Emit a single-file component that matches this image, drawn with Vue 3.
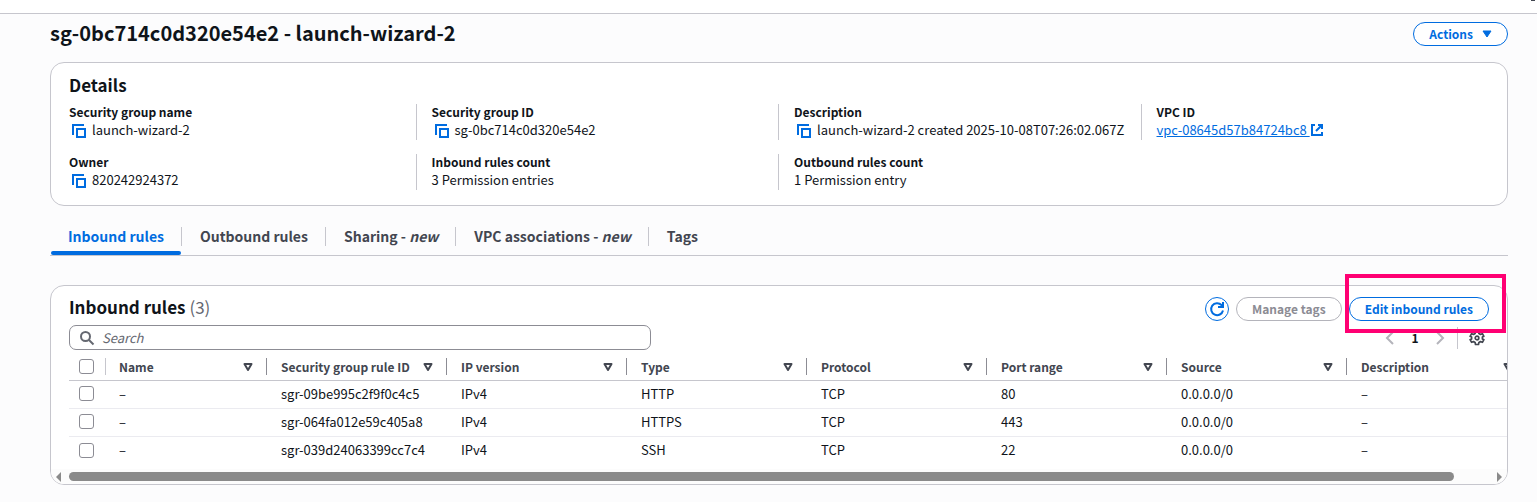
<script setup>
import { ref } from 'vue'

const details = [
  { label: 'Security group name', value: 'launch-wizard-2', copy: true },
  { label: 'Security group ID', value: 'sg-0bc714c0d320e54e2', copy: true },
  { label: 'Description', value: 'launch-wizard-2 created 2025-10-08T07:26:02.067Z', copy: true },
  { label: 'VPC ID', value: 'vpc-08645d57b84724bc8', link: true },
  { label: 'Owner', value: '820242924372', copy: true },
  { label: 'Inbound rules count', value: '3 Permission entries' },
  { label: 'Outbound rules count', value: '1 Permission entry' },
]

const tabs = [
  { label: 'Inbound rules' },
  { label: 'Outbound rules' },
  { label: 'Sharing', isNew: true },
  { label: 'VPC associations', isNew: true },
  { label: 'Tags' },
]
const activeTab = ref(0)
const query = ref('')

const columns = ['Name', 'Security group rule ID', 'IP version', 'Type', 'Protocol', 'Port range', 'Source', 'Description']
const rules = [
  ['–', 'sgr-09be995c2f9f0c4c5', 'IPv4', 'HTTP', 'TCP', '80', '0.0.0.0/0', '–'],
  ['–', 'sgr-064fa012e59c405a8', 'IPv4', 'HTTPS', 'TCP', '443', '0.0.0.0/0', '–'],
  ['–', 'sgr-039d24063399cc7c4', 'IPv4', 'SSH', 'TCP', '22', '0.0.0.0/0', '–'],
]
</script>

<template>
  <div class="page">
    <div class="topbar"><i class="handle"></i></div>
    <main class="content">
      <header class="title-row">
        <h1>sg-0bc714c0d320e54e2 - launch-wizard-2</h1>
        <button type="button" class="btn">
          Actions
          <svg class="caret" width="10" height="8" viewBox="0 0 10 8"><path d="M1 1h8L5 7z" fill="currentColor" stroke="currentColor" stroke-linejoin="round" /></svg>
        </button>
      </header>

      <section class="panel details">
        <h2>Details</h2>
        <dl class="grid">
          <div v-for="d in details" :key="d.label" class="item">
            <dt>{{ d.label }}</dt>
            <dd>
              <button v-if="d.copy" type="button" class="copy" :aria-label="'Copy ' + d.label">
                <svg width="16" height="16" viewBox="0 0 16 16" fill="none" stroke="currentColor" stroke-width="2"><path d="M2 12V2h11" /><path d="M6 6h8v8H6z" /></svg>
              </button>
              <a v-if="d.link" href="#">{{ d.value }}&nbsp;<svg width="14" height="14" viewBox="0 0 14 14" fill="none" stroke="currentColor" stroke-width="2"><path d="M5 2H2v10h10V9" /><path d="M8 2h4v4M12 2L6 8" /></svg></a>
              <span v-else>{{ d.value }}</span>
            </dd>
          </div>
        </dl>
      </section>

      <div class="tabs" role="tablist">
        <button
          v-for="(t, i) in tabs"
          :key="t.label"
          type="button"
          role="tab"
          class="tab"
          :class="{ active: i === activeTab }"
          :aria-selected="i === activeTab"
          @click="activeTab = i"
        ><span>{{ t.label }}<template v-if="t.isNew"> - <em>new</em></template></span></button>
      </div>

      <section class="panel rules">
        <div class="rules-head">
          <h2>Inbound rules <span class="count">(3)</span></h2>
          <div class="actions">
            <button type="button" class="btn round" aria-label="Refresh">
              <svg width="16" height="16" viewBox="0 0 16 16" fill="none" stroke="currentColor" stroke-width="2"><path d="M14 9.500A6 6 0 1 1 12.500 4L14 5.500" /><path d="M14 1v5H9" /></svg>
            </button>
            <button type="button" class="btn" disabled>Manage tags</button>
            <div class="marked">
              <button type="button" class="btn">Edit inbound rules</button>
            </div>
          </div>
        </div>
        <div class="tools">
          <label class="search">
            <svg width="16" height="16" viewBox="0 0 16 16" fill="none" stroke="currentColor" stroke-width="2"><circle cx="6.5" cy="6.5" r="4.5" /><path d="M10 10l4.500 4.500" /></svg>
            <input v-model="query" type="text" placeholder="Search" aria-label="Search" />
          </label>
          <div class="pager">
            <button type="button" class="icon" aria-label="Previous page">
              <svg width="16" height="16" viewBox="0 0 16 16" fill="none" stroke="currentColor" stroke-width="2"><path d="M11 2L5 8l6 6" /></svg>
            </button>
            <span class="num">1</span>
            <button type="button" class="icon" aria-label="Next page">
              <svg width="16" height="16" viewBox="0 0 16 16" fill="none" stroke="currentColor" stroke-width="2"><path d="M5 2l6 6-6 6" /></svg>
            </button>
            <button type="button" class="icon gear" aria-label="Preferences">
              <svg width="16" height="16" viewBox="0 0 16 16" fill="none" stroke="currentColor" stroke-width="1.700" stroke-linejoin="round"><path d="M6.500 1.500h3l.4 2 1.600.9 1.900-.7 1.500 2.600-1.500.8v1.800l1.500.8-1.500 2.600-1.900-.7-1.600.9-.4 2h-3l-.4-2-1.600-.9-1.900.7-1.500-2.600 1.500-.8V7.100l-1.500-.8 1.500-2.600 1.900.7 1.600-.9z" /><circle cx="8" cy="8" r="1.800" /></svg>
            </button>
          </div>
        </div>

        <div class="table-wrap">
          <table>
            <thead>
              <tr>
                <th class="check"><input type="checkbox" aria-label="Select all rules" /></th>
                <th v-for="(c, i) in columns" :key="c" :class="{ first: i === 0 }">
                  <div class="th">
                    <span>{{ c }}</span>
                    <svg width="10" height="8" viewBox="0 0 10 8" fill="none" stroke="currentColor" stroke-width="2" stroke-linejoin="round"><path d="M1.500 1h7L5 7z" /></svg>
                  </div>
                </th>
              </tr>
            </thead>
            <tbody>
              <tr v-for="r in rules" :key="r[1]">
                <td class="check"><input type="checkbox" :aria-label="'Select ' + r[1]" /></td>
                <td v-for="(v, i) in r" :key="i">{{ v }}</td>
              </tr>
            </tbody>
          </table>
        </div>
        <div class="scroll">
          <svg width="5" height="10" viewBox="0 0 5 10"><path d="M5 0v10L0 5z" fill="currentColor" /></svg>
          <div class="track"><div class="thumb"></div></div>
          <svg width="5" height="10" viewBox="0 0 5 10"><path d="M0 0v10l5-5z" fill="currentColor" /></svg>
        </div>
      </section>
    </main>
  </div>
</template>

<style>
body {
  margin: 0;
  background: #fcfcfd;
}
</style>

<style scoped>
.page {
  font-family: "Noto Sans CJK JP", "Noto Sans", sans-serif;
  font-size: 13px;
  line-height: 18px;
  color: #0f141a;
}
.page * { box-sizing: border-box; }
button, input { font: inherit; color: inherit; }
button { cursor: pointer; }
svg { display: block; flex: none; }
h1, h2, dl, dd { margin: 0; }
.topbar {
  display: flex;
  justify-content: flex-end;
  height: 14px;
  padding-right: 2px;
  background: #fff;
  border-bottom: 1px solid #c6c6cd;
}
.handle { width: 4px; height: 1px; background: #424650; }
.content { padding: 8px 29px 16px 50px; }
.title-row {
  display: flex;
  justify-content: space-between;
  align-items: flex-start;
  height: 24px;
  margin-bottom: 16px;
}
h1 { font-size: 20px; line-height: 22px; font-weight: 700; }
h2 { font-size: 17px; line-height: 20px; font-weight: 700; }
.btn {
  display: flex;
  align-items: center;
  gap: 9px;
  height: 24px;
  padding: 0 15px;
  border: 1px solid #006ce0;
  border-radius: 12px;
  background: #fff;
  color: #006ce0;
  font-size: 12px;
  font-weight: 700;
}
.btn:disabled { border-color: #b4b4bb; color: #8c8c94; }
.btn.round { width: 24px; padding: 0; justify-content: center; }
.panel {
  border: 1px solid #c6c6cd;
  border-radius: 14px;
  background: #fff;
}
.details { padding: 12px 18px 15px; }
.grid {
  display: grid;
  grid-template-columns: repeat(4, 1fr);
  gap: 14px 30px;
  margin-top: 9px;
}
.item { position: relative; }
.item:not(:nth-child(4n + 1))::before {
  content: "";
  position: absolute;
  left: -16px;
  top: 0;
  bottom: 0;
  border-left: 1px solid #c6c6cd;
}
dt { padding-bottom: 2px; font-size: 12px; line-height: 16px; font-weight: 700; }
dd { display: flex; align-items: flex-start; height: 18px; line-height: 16px; white-space: nowrap; }
.copy {
  padding: 0;
  margin: 1px 5px 0 2px;
  border: 0;
  background: none;
  color: #006ce0;
}
a { display: flex; align-items: center; color: #006ce0; text-decoration: underline; }
.tabs {
  display: flex;
  margin: 16px 0 29px;
  border-bottom: 1px solid #c6c6cd;
}
.tab {
  position: relative;
  height: 33px;
  padding: 0 0 4px;
  border: 0;
  background: none;
  color: #424650;
  font-size: 14px;
  line-height: 19px;
  font-weight: 700;
}
.tab span { display: block; padding: 0 17px 0 18px; border-right: 1px solid #c6c6cd; }
.tab:last-child span { border-right: 0; }
.tab.active { color: #006ce0; }
.tab.active::after {
  content: "";
  position: absolute;
  left: 1px;
  right: 1px;
  bottom: 0;
  height: 4px;
  border-radius: 2px;
  background: #006ce0;
}
.rules-head {
  display: flex;
  justify-content: space-between;
  align-items: flex-start;
  padding: 11px 18px 0;
}
.count { font-weight: 400; color: #656871; }
.actions { display: flex; gap: 7px; }
.marked { position: relative; }
.marked::after {
  content: "";
  position: absolute;
  z-index: 1;
  inset: -23px -17px -12px -4px;
  border: 4px solid #ff0073;
  pointer-events: none;
}
.tools {
  display: flex;
  justify-content: space-between;
  padding: 4px 18px 0;
}
.search {
  display: flex;
  align-items: center;
  gap: 7px;
  width: 41%;
  height: 25px;
  padding: 0 9px;
  border: 1px solid #8c8c94;
  border-radius: 7px;
  color: #656871;
}
.search input { flex: 1; min-width: 0; padding: 0; border: 0; outline: 0; background: none; }
.search input::placeholder { color: #656871; font-style: italic; opacity: 1; }
.pager { display: flex; align-items: center; height: 25px; }
.icon { padding: 0; border: 0; background: none; color: #b4b4bb; }
.num { width: 34px; text-align: center; font-size: 12px; font-weight: 700; }
.icon.gear { margin-left: 9px; padding: 3px 4px 3px 11px; border-left: 1px solid #c6c6cd; color: #424650; }
.table-wrap { margin-left: 18px; overflow: hidden; }
table { width: 1458px; table-layout: fixed; border-collapse: separate; border-spacing: 0; }
th, td {
  width: 180px;
  height: 28px;
  padding: 0 0 2px 14px;
  border-bottom: 1px solid #ebebf0;
  text-align: left;
  font-weight: 400;
}
th { height: 31px; padding: 3px 0 0; border-color: #c6c6cd; color: #424650; font-size: 12px; font-weight: 700; }
th.first { width: 162px; }
th.check { width: 36px; }
tbody tr:last-child td { border-bottom: 0; }
td.check { padding-left: 0; }
.check input {
  appearance: none;
  display: block;
  width: 15px;
  height: 15px;
  margin: 0 0 0 10px;
  border: 1px solid #8c8c94;
  border-radius: 3px;
  background: #fff;
}
.th {
  display: flex;
  justify-content: space-between;
  align-items: center;
  height: 17px;
  padding: 0 13px 0 14px;
  border-right: 1px solid #8c8c94;
  white-space: nowrap;
}
th.first .th { padding-left: 13px; border-left: 1px solid #c6c6cd; }
.scroll {
  display: flex;
  align-items: center;
  gap: 8px;
  height: 15px;
  margin-top: 4px;
  padding: 0 5px;
  border-radius: 0 0 13px 13px;
  background: #fcfcfc;
  color: #8a8a8a;
}
.track { flex: 1; }
.thumb { width: 97.5%; height: 9px; border-radius: 5px; background: #8a8a8a; }
</style>
